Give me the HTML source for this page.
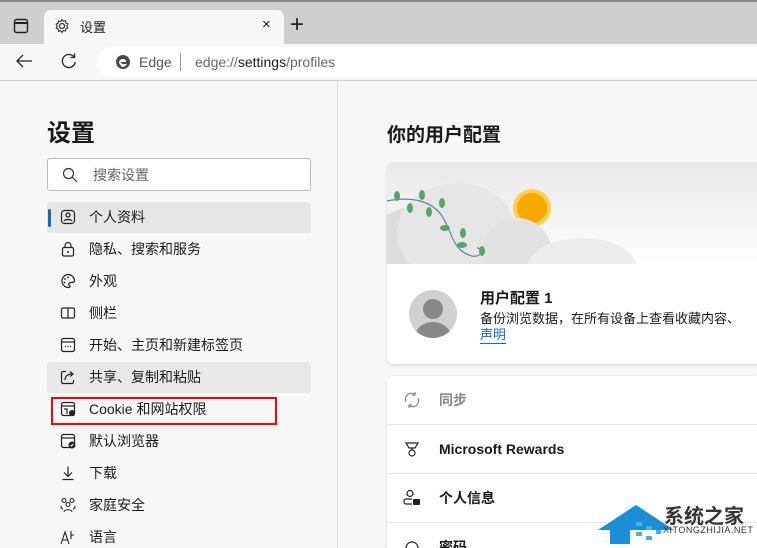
<!DOCTYPE html>
<html style="overflow:hidden"><head><meta charset="utf-8"><style>
*{margin:0;padding:0;box-sizing:border-box}
body{width:757px;height:548px;overflow:hidden;background:#f7f7f7;font-family:"Liberation Sans","Noto Sans CJK SC",sans-serif;color:#1a1a1a;position:relative}
.abs{position:absolute}
.nav{position:absolute;left:47px;width:264px;height:31px;font-size:14px;line-height:31px;padding-left:42px}
.nav svg{position:absolute;left:13px;top:7px}
.row{position:absolute;left:387px;width:370px;height:49px;border-bottom:1px solid #e5e5e5;font-size:14px;font-weight:bold;line-height:49px;padding-left:52px}
.row svg{position:absolute;left:16px;top:15px}
</style></head><body>
<div class="abs" style="left:0;top:0;width:757px;height:44px;background:#cfcfcf;border-top:2px solid #8a8a8a"></div>
<svg class="abs" style="left:13px;top:18px" width="16" height="16"><rect x="1.5" y="1.5" width="13" height="13" rx="2" fill="none" stroke="#222" stroke-width="1.4"/><line x1="1.5" y1="5" x2="14.5" y2="5" stroke="#222" stroke-width="2"/></svg>
<div class="abs" style="left:44px;top:10px;width:240px;height:36px;background:#f7f7f7;border-radius:7px 7px 0 0"></div>
<svg class="abs" style="left:54px;top:18px" width="16" height="16" viewBox="0 0 16 16"><circle cx="8" cy="8" r="2.5" fill="none" stroke="#333" stroke-width="1.2"/><path d="M8 1.5l1.3 1.8 2.2-.6.3 2.2 2 1-1 2 1 2-2 1-.3 2.2-2.2-.6L8 14.5l-1.3-1.8-2.2.6-.3-2.2-2-1 1-2-1-2 2-1 .3-2.2 2.2.6z" fill="none" stroke="#333" stroke-width="1.1"/></svg>
<div class="abs" style="left:80px;top:17px;font-size:13px">设置</div>
<div class="abs" style="left:262px;top:16px;font-size:15px">×</div>
<div class="abs" style="left:290px;top:11px;font-size:24px;font-weight:200;color:#222">+</div>
<div class="abs" style="left:0;top:44px;width:757px;height:37px;background:#f7f7f7;border-bottom:1px solid #d0d0d0"></div>
<svg class="abs" style="left:15px;top:53px" width="18" height="16"><path d="M17 8H2M8 2L2 8l6 6" fill="none" stroke="#222" stroke-width="1.3"/></svg>
<svg class="abs" style="left:60px;top:52px" width="18" height="18"><path d="M14 5A6.5 6.5 0 1 0 15.3 10" fill="none" stroke="#222" stroke-width="1.3"/><path d="M14.5 1.5V5.5H10.5" fill="none" stroke="#222" stroke-width="1.3"/></svg>
<div class="abs" style="left:97px;top:47px;width:680px;height:30px;background:#fff;border-radius:15px"></div>
<svg class="abs" style="left:115px;top:54px" width="16" height="16"><circle cx="8" cy="8" r="7" fill="#4a4a4a"/><path d="M4 9c0-3 3-5 6-3.5 1 .6 1.4 1.5 1 2.5H6c0 2 3 3 6 1.5-1 2.5-3 3.5-5 3.5" fill="#fff"/></svg>
<div class="abs" style="left:139px;top:54px;font-size:14px;color:#555">Edge</div>
<div class="abs" style="left:180px;top:53px;width:1px;height:18px;background:#999"></div>
<div class="abs" style="left:195px;top:54px;font-size:14px;color:#666">edge://<span style="color:#1a1a1a">settings</span>/profiles</div>
<div class="abs" style="left:337px;top:81px;width:1px;height:467px;background:#ddd"></div>
<div class="abs" style="left:47px;top:113px;font-size:24px;font-weight:bold">设置</div>
<div class="abs" style="left:47px;top:158px;width:264px;height:33px;background:#fff;border:1px solid #bbb;border-radius:3px"></div>
<svg class="abs" style="left:62px;top:167px" width="16" height="16"><circle cx="6.5" cy="6.5" r="5" fill="none" stroke="#333" stroke-width="1.2"/><path d="M10 10l5 5" stroke="#333" stroke-width="1.2"/></svg>
<div class="abs" style="left:93px;top:165px;font-size:14px;color:#666">搜索设置</div>
<div class="nav" style="top:202px;background:#e6e6e6;border-radius:3px"><svg width="16" height="16"><rect x="1.5" y="1.5" width="13" height="13" rx="3" fill="none" stroke="#222" stroke-width="1.2"/><circle cx="8" cy="6" r="2" fill="none" stroke="#222" stroke-width="1.2"/><path d="M4 12c1-2 7-2 8 0" fill="none" stroke="#222" stroke-width="1.2"/></svg>个人资料</div>
<div class="abs" style="left:48px;top:209px;width:3px;height:18px;background:#0f6cbd;border-radius:2px"></div>
<div class="nav" style="top:234px"><svg width="16" height="16"><rect x="2.5" y="6.5" width="11" height="8.5" rx="1.5" fill="none" stroke="#222" stroke-width="1.2"/><path d="M5 6.5V4.5a3 3 0 0 1 6 0v2" fill="none" stroke="#222" stroke-width="1.2"/><circle cx="8" cy="11" r="1" fill="#222"/></svg>隐私、搜索和服务</div>
<div class="nav" style="top:266px"><svg width="16" height="16"><path d="M8 1.5a6.5 6.5 0 1 0 1 13c1.5-.3 1-2 0-2.5s0-2.5 2-2.5 3.5 0 3.5-2.5A6.5 6.5 0 0 0 8 1.5z" fill="none" stroke="#222" stroke-width="1.2"/><circle cx="5" cy="6" r=".9" fill="#222"/><circle cx="8" cy="4.5" r=".9" fill="#222"/><circle cx="4.5" cy="9.5" r=".9" fill="#222"/></svg>外观</div>
<div class="nav" style="top:298px"><svg width="16" height="16"><rect x="1.5" y="3" width="13" height="10" rx="1.5" fill="none" stroke="#222" stroke-width="1.2"/><path d="M8 3v10" stroke="#222" stroke-width="1.2"/></svg>侧栏</div>
<div class="nav" style="top:330px"><svg width="16" height="16"><rect x="1.5" y="1.5" width="13" height="13" rx="2" fill="none" stroke="#222" stroke-width="1.2"/><path d="M1.5 5h13" stroke="#222" stroke-width="1.2"/><path d="M5 9.5h1M7.5 9.5h1M10 9.5h1" stroke="#222" stroke-width="1.4"/></svg>开始、主页和新建标签页</div>
<div class="nav" style="top:362px;background:#e9e9e9;border-radius:3px"><svg width="16" height="16"><path d="M6 2.5H3a1.5 1.5 0 0 0-1.5 1.5v9A1.5 1.5 0 0 0 3 14.5h9a1.5 1.5 0 0 0 1.5-1.5v-2" fill="none" stroke="#222" stroke-width="1.2"/><path d="M5 11c0-4 3-6 7-6M10 2.5l3 2.5-3 2.5" fill="none" stroke="#222" stroke-width="1.2"/></svg>共享、复制和粘贴</div>
<div class="nav" style="top:394px"><svg width="16" height="16"><rect x="1.5" y="1.5" width="13" height="13" rx="2" fill="none" stroke="#222" stroke-width="1.2"/><path d="M1.5 5h13M4 8h3v5" fill="none" stroke="#222" stroke-width="1.2"/><circle cx="12" cy="12" r="3" fill="#222"/></svg>Cookie 和网站权限</div>
<div class="abs" style="left:51px;top:397px;width:226px;height:28px;border:2px solid #f00"></div>
<div class="nav" style="top:426px"><svg width="16" height="16"><rect x="1.5" y="1.5" width="13" height="13" rx="2" fill="none" stroke="#222" stroke-width="1.2"/><path d="M1.5 5h13" stroke="#222" stroke-width="1.2"/><circle cx="12" cy="12" r="3.5" fill="#222"/><path d="M10.5 12l1 1 2-2" stroke="#fff" fill="none"/></svg>默认浏览器</div>
<div class="nav" style="top:458px"><svg width="16" height="16"><path d="M8 1.5v10M4 7.5l4 4 4-4M2.5 14.5h11" fill="none" stroke="#222" stroke-width="1.2"/></svg>下载</div>
<div class="nav" style="top:490px"><svg width="16" height="16"><circle cx="4" cy="3.5" r="2" fill="none" stroke="#222" stroke-width="1.1"/><circle cx="12" cy="3.5" r="2" fill="none" stroke="#222" stroke-width="1.1"/><circle cx="8" cy="7.5" r="2" fill="none" stroke="#222" stroke-width="1.1"/><path d="M1 9c0 2 1 3 2 3M15 9c0 2-1 3-2 3M4 15c0-3 8-3 8 0" fill="none" stroke="#222" stroke-width="1.1"/></svg>家庭安全</div>
<div class="nav" style="top:522px"><svg width="16" height="16"><path d="M1 15L5 3l4 12M2.5 11h5M11 2v8M11 6h3" fill="none" stroke="#222" stroke-width="1.1"/></svg>语言</div>
<div class="abs" style="left:387px;top:120px;font-size:19px;font-weight:bold">你的用户配置</div>
<div class="abs" style="left:387px;top:163px;width:380px;height:201px;background:#fff;border-radius:6px;box-shadow:0 1px 3px rgba(0,0,0,.15);overflow:hidden">
 <div style="height:101px;background:linear-gradient(#e9e9e9,#f5f5f5 60%,#fff);position:relative;overflow:hidden">
  <div style="position:absolute;left:130px;top:30px;width:30px;height:30px;border-radius:50%;background:#f5a800;box-shadow:0 0 0 4px #fcd04a"></div>
  <div style="position:absolute;left:-30px;top:40px;width:170px;height:100px;border-radius:50%;background:#dcdcdc"></div>
  <div style="position:absolute;left:10px;top:20px;width:120px;height:100px;border-radius:50%;background:#e6e6e6"></div>
  <div style="position:absolute;left:95px;top:55px;width:70px;height:70px;border-radius:50%;background:#e2e2e2"></div>
  <div style="position:absolute;left:140px;top:75px;width:110px;height:60px;border-radius:50%;background:#ececec"></div>
  <svg style="position:absolute;left:0;top:20px" width="110" height="80"><path d="M0 18c25-5 45 0 55 15s10 35 30 40c10 2 12-8 5-8" fill="none" stroke="#5b86a8" stroke-width="1.2"/><g fill="#5aa36a"><ellipse cx="10" cy="13" rx="3" ry="5"/><ellipse cx="35" cy="12" rx="3" ry="5"/><ellipse cx="23" cy="25" rx="3" ry="5"/><ellipse cx="42" cy="29" rx="3" ry="5"/><ellipse cx="55" cy="20" rx="3" ry="5"/><ellipse cx="58" cy="45" rx="5" ry="3"/><ellipse cx="76" cy="50" rx="3" ry="5"/><ellipse cx="75" cy="62" rx="5" ry="3"/><ellipse cx="95" cy="68" rx="3" ry="5"/></g></svg>
 </div>
 <div style="position:absolute;left:22px;top:127px;width:48px;height:48px;border-radius:50%;background:#d2d0ce;overflow:hidden"><div style="position:absolute;left:14px;top:9px;width:20px;height:20px;border-radius:50%;background:#8a8886"></div><div style="position:absolute;left:6px;top:32px;width:36px;height:30px;border-radius:50%;background:#8a8886"></div></div>
 <div style="position:absolute;left:93px;top:124px;font-size:15px;font-weight:bold">用户配置 1</div>
 <div style="position:absolute;left:93px;top:145px;font-size:13px;white-space:nowrap">备份浏览数据，在所有设备上查看收藏内容、</div>
 <div style="position:absolute;left:93px;top:164px;font-size:13px;color:#0f6cbd;border-bottom:1px solid #0f6cbd;line-height:16px">声明</div>
</div>
<div class="abs" style="left:387px;top:376px;width:370px;height:172px;background:#fff;border-radius:6px 0 0 0;box-shadow:0 1px 3px rgba(0,0,0,.15)"></div>
<div class="row" style="top:376px;color:#888"><svg width="18" height="18"><path d="M3 11A6 6 0 0 1 12 3.5M15 7A6 6 0 0 1 6 14.5M12 1v3h-3M6 17v-3h3" fill="none" stroke="#888" stroke-width="1.2"/></svg>同步</div>
<div class="row" style="top:425px"><svg width="18" height="18"><path d="M3 3h12l-3 5H6zM9 8v2" fill="none" stroke="#222" stroke-width="1.2"/><circle cx="9" cy="13" r="3" fill="none" stroke="#222" stroke-width="1.2"/></svg>Microsoft Rewards</div>
<div class="row" style="top:474px"><svg width="18" height="18"><circle cx="7" cy="4.5" r="3" fill="none" stroke="#222" stroke-width="1.2"/><path d="M9 10H3a2 2 0 0 0-2 2v1a2 2 0 0 0 2 2h6" fill="none" stroke="#222" stroke-width="1.2"/><rect x="10" y="10" width="7" height="6" rx="1" fill="#222"/></svg>个人信息</div>
<div class="row" style="top:523px;border:none;height:25px;overflow:hidden"><svg width="18" height="18"><circle cx="9" cy="10" r="6" fill="none" stroke="#222" stroke-width="1.2"/></svg>密码</div>
<svg class="abs" style="left:596px;top:500px" width="80" height="45"><path d="M2 30L40 5l38 25z" fill="#1a8fd8"/><rect x="14" y="26" width="20" height="18" fill="#1a8fd8"/><g fill="#4aaee8"><rect x="40" y="22" width="6" height="4"/><rect x="50" y="26" width="6" height="4"/><rect x="40" y="32" width="6" height="4"/><rect x="60" y="30" width="5" height="4"/><rect x="50" y="36" width="6" height="4"/></g></svg>
<div class="abs" style="left:664px;top:500px;font-size:20px;font-weight:bold;color:#333">系统之家</div>
<div class="abs" style="left:663px;top:525px;font-size:9px;color:#333;letter-spacing:.5px">XITONGZHIJIA.NET</div>
</body></html>
